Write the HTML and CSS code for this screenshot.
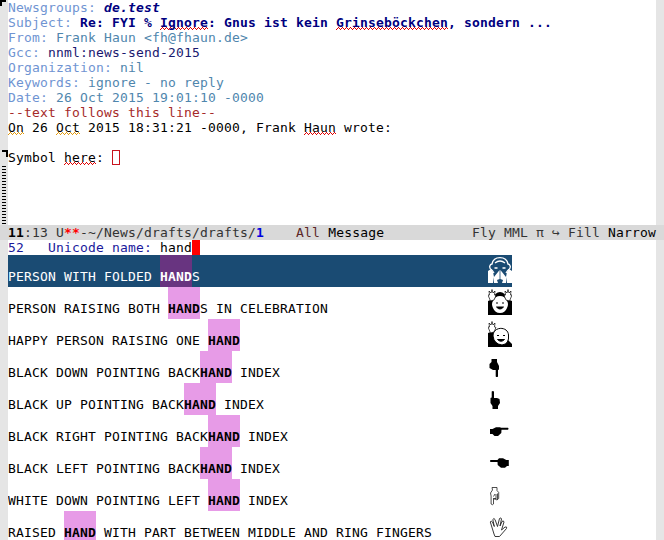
FILE: index.html
```html
<!DOCTYPE html>
<html lang="en">
<head>
<meta charset="utf-8">
<title>Draft message</title>
<link rel="stylesheet" href="styles.css">
</head>
<body>
<div class="frame">
<section class="window">
<div class="fringe"><i class="corner-top"></i><i class="corner-end"></i><i class="empty-lines"></i></div>
<div class="buffer">
<div class="line"><span class="key">Newsgroups: </span><b class="groups">de.test</b></div>
<div class="line"><span class="key">Subject: </span><b class="subject">Re: FYI % <span class="wave">Ignore</span>: Gnus ist kein <span class="wave">Grinseböckchen</span>, sondern ...</b></div>
<div class="line value"><span class="key">From: </span>Frank Haun &lt;fh@fhaun.de&gt;</div>
<div class="line"><span class="key">Gcc: </span><span class="gcc">nnml:news-send-2015</span></div>
<div class="line value"><span class="key">Organization: </span>nil</div>
<div class="line value"><span class="key">Keywords: </span>ignore - no reply</div>
<div class="line value"><span class="key">Date: </span>26 Oct 2015 19:01:10 -0000</div>
<div class="line separator">--text follows this line--</div>
<div class="line"><span class="wave amber">On</span> 26 <span class="wave amber">Oct</span> 2015 18:31:21 -0000, Frank <span class="wave">Haun</span> wrote:</div>
<div class="line"></div>
<div class="line">Symbol <span class="wave">here</span>: <span class="hollow"></span></div>
</div>
<div class="fringe"></div>
</section>
<div class="modeline"><div><b>11</b>:13 U<b class="red">**</b>-~/News/drafts/drafts/<b class="blue">1</b>    <span class="all">All</span> <span class="major">Message</span></div><div>Fly MML π ↪ Fill <span class="major">Narrow</span></div></div>
<section class="window mini">
<div class="fringe"></div>
<div class="buffer">
<div class="line"><span class="prompt">52   Unicode name: </span>hand<span class="cursor"></span></div>
<div class="row selected"><span>PERSON WITH FOLDED <mark>HAND</mark>S</span>
<svg class="icon" viewBox="0 0 24 32"><path d="M0 28V16L3 14L5 17L6 22L5 28zM24 28V16L21 14L19 17L18 22L19 28zM6 22L11.6 15V24L9 25L10 28H6zM18 22L12.4 15V24L15 25L14 28H18z" fill="#fff"/><path d="M4 15C0 13 2 9 4 9C5 4 9 2.700 12 2.700S19 4 20 9C22 9 24 13 20 15M7 8Q12 4 17 8M6.500 13h3M14.500 13h3M4 15L6 18M20 15L18 18" fill="none" stroke="#fff" stroke-width="1.300"/></svg></div>
<div class="row"><span>PERSON RAISING BOTH <mark>HAND</mark>S IN CELEBRATION</span>
<svg class="icon" viewBox="0 0 24 32"><path d="M0 14L5 12Q7 5 12 5T19 12L24 14V28H0z"/><path d="M5 14Q7 9 12 9T19 14Q21 17 19 21Q17 26 12 26T5 21Q3 17 5 14z" fill="#fff"/><path d="M8 16h2M14 16h2M8.500 20Q12 24 15.500 20z" stroke="#000"/><path d="M2.500 14L0 8L1.500 8L1 4L3 6L4 2.500L5 6L7 4L6.500 8L8 8.500L6 13zM21.500 14L24 8L22.500 8L23 4L21 6L20 2.500L19 6L17 4L17.500 8L16 8.500L18 13z" fill="#fff" stroke="#000" stroke-width=".7"/></svg></div>
<div class="row"><span>HAPPY PERSON RAISING ONE <mark>HAND</mark></span>
<svg class="icon" viewBox="0 0 24 32"><path d="M0 14L6 12V22L20 21L24 25V28H0z"/><path d="M5 17C5 7 20 7 20.500 16Q21.500 25 14 26Q6 25 5 17z" fill="#fff" stroke="#000"/><path d="M9 16.500h2M15 16.500h2M9.500 20.500Q13 24 16.500 20.500z" stroke="#000"/><path d="M2.500 14L0 8L1.500 8L1 4L3 6L4 2.500L5 6L7 4L6.500 8L8 8.500L6 13z" fill="#fff" stroke="#000" stroke-width=".7"/></svg></div>
<div class="row"><span>BLACK DOWN POINTING BACK<mark>HAND</mark> INDEX</span>
<svg class="icon" viewBox="0 0 24 32"><path d="M3.500 8H9v3l2 4v3.500l-1 .5v6.500q-1.100 1.200-2.300 0V19H5L1.500 17V13L3.500 11z"/></svg></div>
<div class="row"><span>BLACK UP POINTING BACK<mark>HAND</mark> INDEX</span>
<svg class="icon" viewBox="0 0 24 32"><path d="M3.700 8.500q1.100-1 2.300 0V15h3l2.500 1 .5 4-2 3v3H4.500v-3l-2-3v-5l1.200-.5z"/></svg></div>
<div class="row"><span>BLACK RIGHT POINTING BACK<mark>HAND</mark> INDEX</span>
<svg class="icon" viewBox="0 0 24 32"><path d="M2 14h2.500L8 12.300h4l1 .4h7q1.200 1 0 2h-6.500l-.2 3.300-3.300 3H6.500L4.500 19H2z"/></svg></div>
<div class="row"><span>BLACK LEFT POINTING BACK<mark>HAND</mark> INDEX</span>
<svg class="icon" viewBox="0 0 24 32"><path d="M20.800 13h-2.500L15 11.300h-4L9.500 13h-7q-1.200 1 0 2h7l.2 3 3.300 2.800h4l2-1.800h1.800z"/></svg></div>
<div class="row"><span>WHITE DOWN POINTING LEFT <mark>HAND</mark> INDEX</span>
<svg class="icon" viewBox="0 0 24 32"><path d="M4 8.500h5v3l1.700 2v6L9 21 7 20H5.500v5q-1.200 1.500-2.400 0v-8L2.500 14 4.500 11zM5.500 17.500L7 15M8 15v5M9.500 14.500v6M5 19.500h3" fill="none" stroke="#222" stroke-width=".8"/></svg></div>
<div class="row"><span>RAISED <mark>HAND</mark> WITH PART BETWEEN MIDDLE AND RING FINGERS</span>
<svg class="icon" viewBox="0 0 24 32"><path d="M6 23L2.300 11Q3 9 4.500 11L6.300 15.500L4.800 8.500Q6 6.500 7 8.500L9.500 15.500L11.500 7.500Q13 6 13.500 8L12 15L14 10.500Q15.500 9 16 11L13.500 19L17 16Q19.500 15.500 18.500 17.500L11.500 25.500H7z" fill="none" stroke="#222" stroke-width=".9"/></svg></div>
</div>
<div class="fringe"></div>
</section>
</div>
</body>
</html>
```
FILE: styles.css
```css
body { margin: 0; background: #fff; overflow: hidden; }
.frame {
  width: 664px; height: 540px; overflow: hidden;
  display: flex; flex-direction: column;
  font: 13px/15px "DejaVu Sans Mono", monospace;
  letter-spacing: 0.1736px; color: #000; white-space: pre;
}
.window { display: flex; height: 225px; overflow: hidden; }
.mini { height: 300px; }
.fringe { position: relative; flex: 0 0 8px; background: #e5e5e5; }
.buffer { flex: 1; display: flex; flex-direction: column; min-width: 0; }
.line { height: 15px; flex: none; }
.key { color: #6f94d2; }
.value { color: #4f86ad; }
.groups { color: #000080; font-style: italic; }
.subject { color: #000080; }
.gcc { color: #191970; }
.separator { color: #a52a2a; }
.wave {
  --ink: #e00000;
  display: inline-block; height: 15px; vertical-align: top;
  background:
    linear-gradient(90deg, transparent 2px, var(--ink) 2px 3px, transparent 3px) 0 12px / 4px 1px repeat-x,
    linear-gradient(90deg, transparent 1px, var(--ink) 1px 2px, transparent 2px 3px, var(--ink) 3px) 0 13px / 4px 1px repeat-x,
    linear-gradient(90deg, var(--ink) 1px, transparent 1px) 0 14px / 4px 1px repeat-x;
}
.amber { --ink: #e09a10; }
.hollow { display: inline-block; box-sizing: border-box; width: 8px; height: 15px; border: 1px solid #c8141e; vertical-align: top; }
.modeline {
  height: 15px; flex: none; padding: 0 8px; display: flex; justify-content: space-between;
  background: #d9d9d9; color: #333;
}
.modeline b { color: #000; }
.modeline .red { color: #f00; }
.modeline .blue { color: #0000e0; }
.all { color: #5c2626; }
.major { color: #000; }
.prompt { color: #1a1a9c; }
.cursor { display: inline-block; width: 8px; height: 15px; background: #f00; vertical-align: top; }
.row { flex: none; width: 504px; height: 32px; display: grid; grid-template-columns: 480px 24px; overflow: hidden; white-space: normal; }
.row > span { padding-top: 14px; white-space: pre; }
.row mark { background: #e79be7; color: inherit; font-weight: bold; padding: 14px 0 3px; }
.selected { background: #1a4b73; color: #fff; }
.selected mark { background: #683480; }
.icon { width: 24px; height: 32px; display: block; }
.corner-top { position: absolute; left: 0; top: 0; width: 4px; height: 4px; border: solid #000; border-width: 2px 0 0 2px; }
.corner-end { position: absolute; left: 2px; top: 150px; width: 4px; height: 5px; border: solid #000; border-width: 2px 2px 0 0; }
.empty-lines { position: absolute; left: 2px; top: 166px; width: 4px; height: 58px; background: repeating-linear-gradient(#000 0 1px, transparent 1px 3px); }
```
